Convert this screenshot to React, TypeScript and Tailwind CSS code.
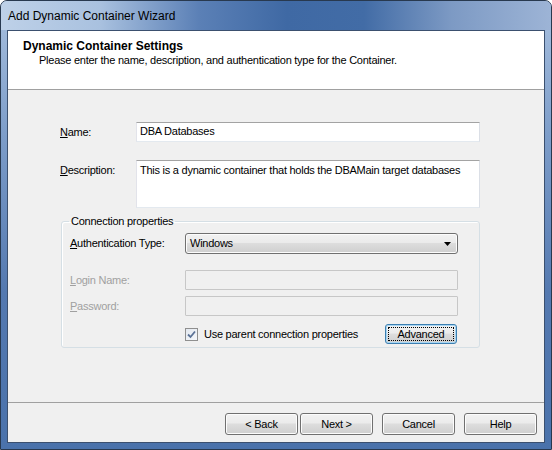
const font = "font-['Liberation_Sans',Arial,sans-serif]";

const U = ({ c }: { c: string }) => <span className="underline underline-offset-[1px]">{c}</span>;

const TextBox = ({ value, className = '' }: { value?: string; className?: string }) => (
    <div className={`bg-white border border-[#abadb3] border-t-[#a3a3a3] border-l-[#e2e3ea] border-r-[#dbdfe6] border-b-[#e3e9ef] px-[2px] text-[11px] leading-[17px] text-black ${className}`}>
        {value}
    </div>
);

const DisabledBox = () => (
    <div className="h-[20px] w-[273px] border border-[#c7c7c7] bg-[#f0f0f0] rounded-[1px]"></div>
);

const WinButton = ({ label, focused = false, className = '' }: { label: string; focused?: boolean; className?: string }) => (
    <div
        className={`flex items-center justify-center rounded-[3px] border text-[11px] text-black bg-[linear-gradient(to_bottom,#f2f2f2_0%,#ebebeb_45%,#dddddd_50%,#cfcfcf_100%)] ${
            focused ? 'border-[#3c7fb1] shadow-[inset_0_0_0_1px_#a6d5f3]' : 'border-[#707070] shadow-[inset_0_0_0_1px_#fcfcfc]'
        } ${className}`}
    >
        {focused ? (
            <span className="flex items-center justify-center w-[calc(100%-4px)] h-[calc(100%-4px)] border border-dotted border-black">{label}</span>
        ) : (
            <span>{label}</span>
        )}
    </div>
);

export default function App() {
    return (
        <div className={`w-[552px] h-[450px] bg-white tracking-[-0.25px] ${font}`}>
            <div className="w-[552px] h-[450px] flex flex-col rounded-t-[7px] border border-[#28394f] bg-[linear-gradient(to_bottom,#a8c0df_0%,#7d9dc9_30%,#5479b0_65%,#4a72ab_100%)] overflow-hidden">
                {/* title bar */}
                <div className="h-[29px] shrink-0 flex items-center pl-[7px] bg-[linear-gradient(to_right,#bed1e8_0%,#a9c1df_18%,#5b80b6_36%,#3f69a4_52%,#426ca6_66%,#7d9ac4_82%,#9db4d6_100%)]">
                    <span className="text-[12px] text-black tracking-[0px]">Add Dynamic Container Wizard</span>
                </div>

                {/* client area */}
                <div className="flex-1 mx-[6px] mb-[6px] border border-[#3b506f] bg-[#f0f0f0] flex flex-col">
                    {/* header */}
                    <div className="h-[59px] shrink-0 bg-white border-b border-[#a0a0a0] pl-[15px] pt-[8px]">
                        <div className="text-[12px] font-bold leading-[15px] text-black tracking-[0px]">Dynamic Container Settings</div>
                        <div className="text-[11px] leading-[13px] text-black pl-[16px]">
                            Please enter the name, description, and authentication type for the Container.
                        </div>
                    </div>

                    {/* body */}
                    <div className="flex-1 pl-[52px] pt-[32px] text-[11px] text-black">
                        <div className="flex items-center">
                            <div className="w-[76px]"><U c="N" />ame:</div>
                            <TextBox value="DBA Databases" className="w-[344px] h-[20px] pl-[3px]" />
                        </div>
                        <div className="flex items-start mt-[18px]">
                            <div className="w-[76px] pt-[2px]"><U c="D" />escription:</div>
                            <TextBox
                                value="This is a dynamic container that holds the DBAMain target databases"
                                className="w-[344px] h-[48px] pl-[3px] pt-[1px]"
                            />
                        </div>

                        <fieldset className="ml-[1px] mt-[7px] w-[419px] h-[133px] border border-[#d5dfe5] rounded-[3px] pl-[8px] pr-[21px] shadow-[inset_1px_1px_0_#ffffff]">
                            <legend className="ml-[-1px] px-[2px] leading-[13px]">Connection properties</legend>
                            <div className="flex items-center mt-[5px]">
                                <div className="w-[115px]"><U c="A" />uthentication Type:</div>
                                <div className="w-[273px] h-[21px] rounded-[3px] border border-[#707070] bg-[linear-gradient(to_bottom,#f2f2f2_0%,#ebebeb_45%,#dddddd_50%,#cfcfcf_100%)] shadow-[inset_0_0_0_1px_#fcfcfc] flex items-center pl-[4px] pr-[6px]">
                                    <span className="flex-1">Windows</span>
                                    <svg width="7" height="4" viewBox="0 0 7 4">
                                        <path d="M0 0 H7 L3.5 4 Z" fill="#000" />
                                    </svg>
                                </div>
                            </div>
                            <div className="flex items-center mt-[16px] text-[#a0a0a0]">
                                <div className="w-[115px]"><U c="L" />ogin Name:</div>
                                <DisabledBox />
                            </div>
                            <div className="flex items-center mt-[6px] text-[#a0a0a0]">
                                <div className="w-[115px]"><U c="P" />assword:</div>
                                <DisabledBox />
                            </div>
                            <div className="flex items-center mt-[8px]">
                                <div className="w-[115px]"></div>
                                <div className="w-[13px] h-[13px] border border-[#8f8f8f] bg-[linear-gradient(135deg,#e3e8ef,#f5f7fa)] flex items-center justify-center">
                                    <svg width="9" height="9" viewBox="0 0 9 9">
                                        <path d="M1 4.5 L3.5 7 L8 1.5" stroke="#5a7196" strokeWidth="1.8" fill="none" />
                                    </svg>
                                </div>
                                <span className="ml-[6px] flex-1">Use parent connection properties</span>
                                <WinButton label="Advanced" focused className="w-[72px] h-[20px] mr-[1px]" />
                            </div>
                        </fieldset>
                    </div>

                    {/* button bar */}
                    <div className="h-[40px] shrink-0 border-t border-[#a0a0a0] flex items-start justify-end pr-[7px] pt-[10px]">
                        <WinButton label="< Back" className="w-[73px] h-[22px]" />
                        <WinButton label="Next >" className="w-[73px] h-[22px] ml-[2px]" />
                        <WinButton label="Cancel" className="w-[73px] h-[22px] ml-[9px]" />
                        <WinButton label="Help" className="w-[73px] h-[22px] ml-[9px]" />
                    </div>
                </div>
            </div>
        </div>
    );
}
